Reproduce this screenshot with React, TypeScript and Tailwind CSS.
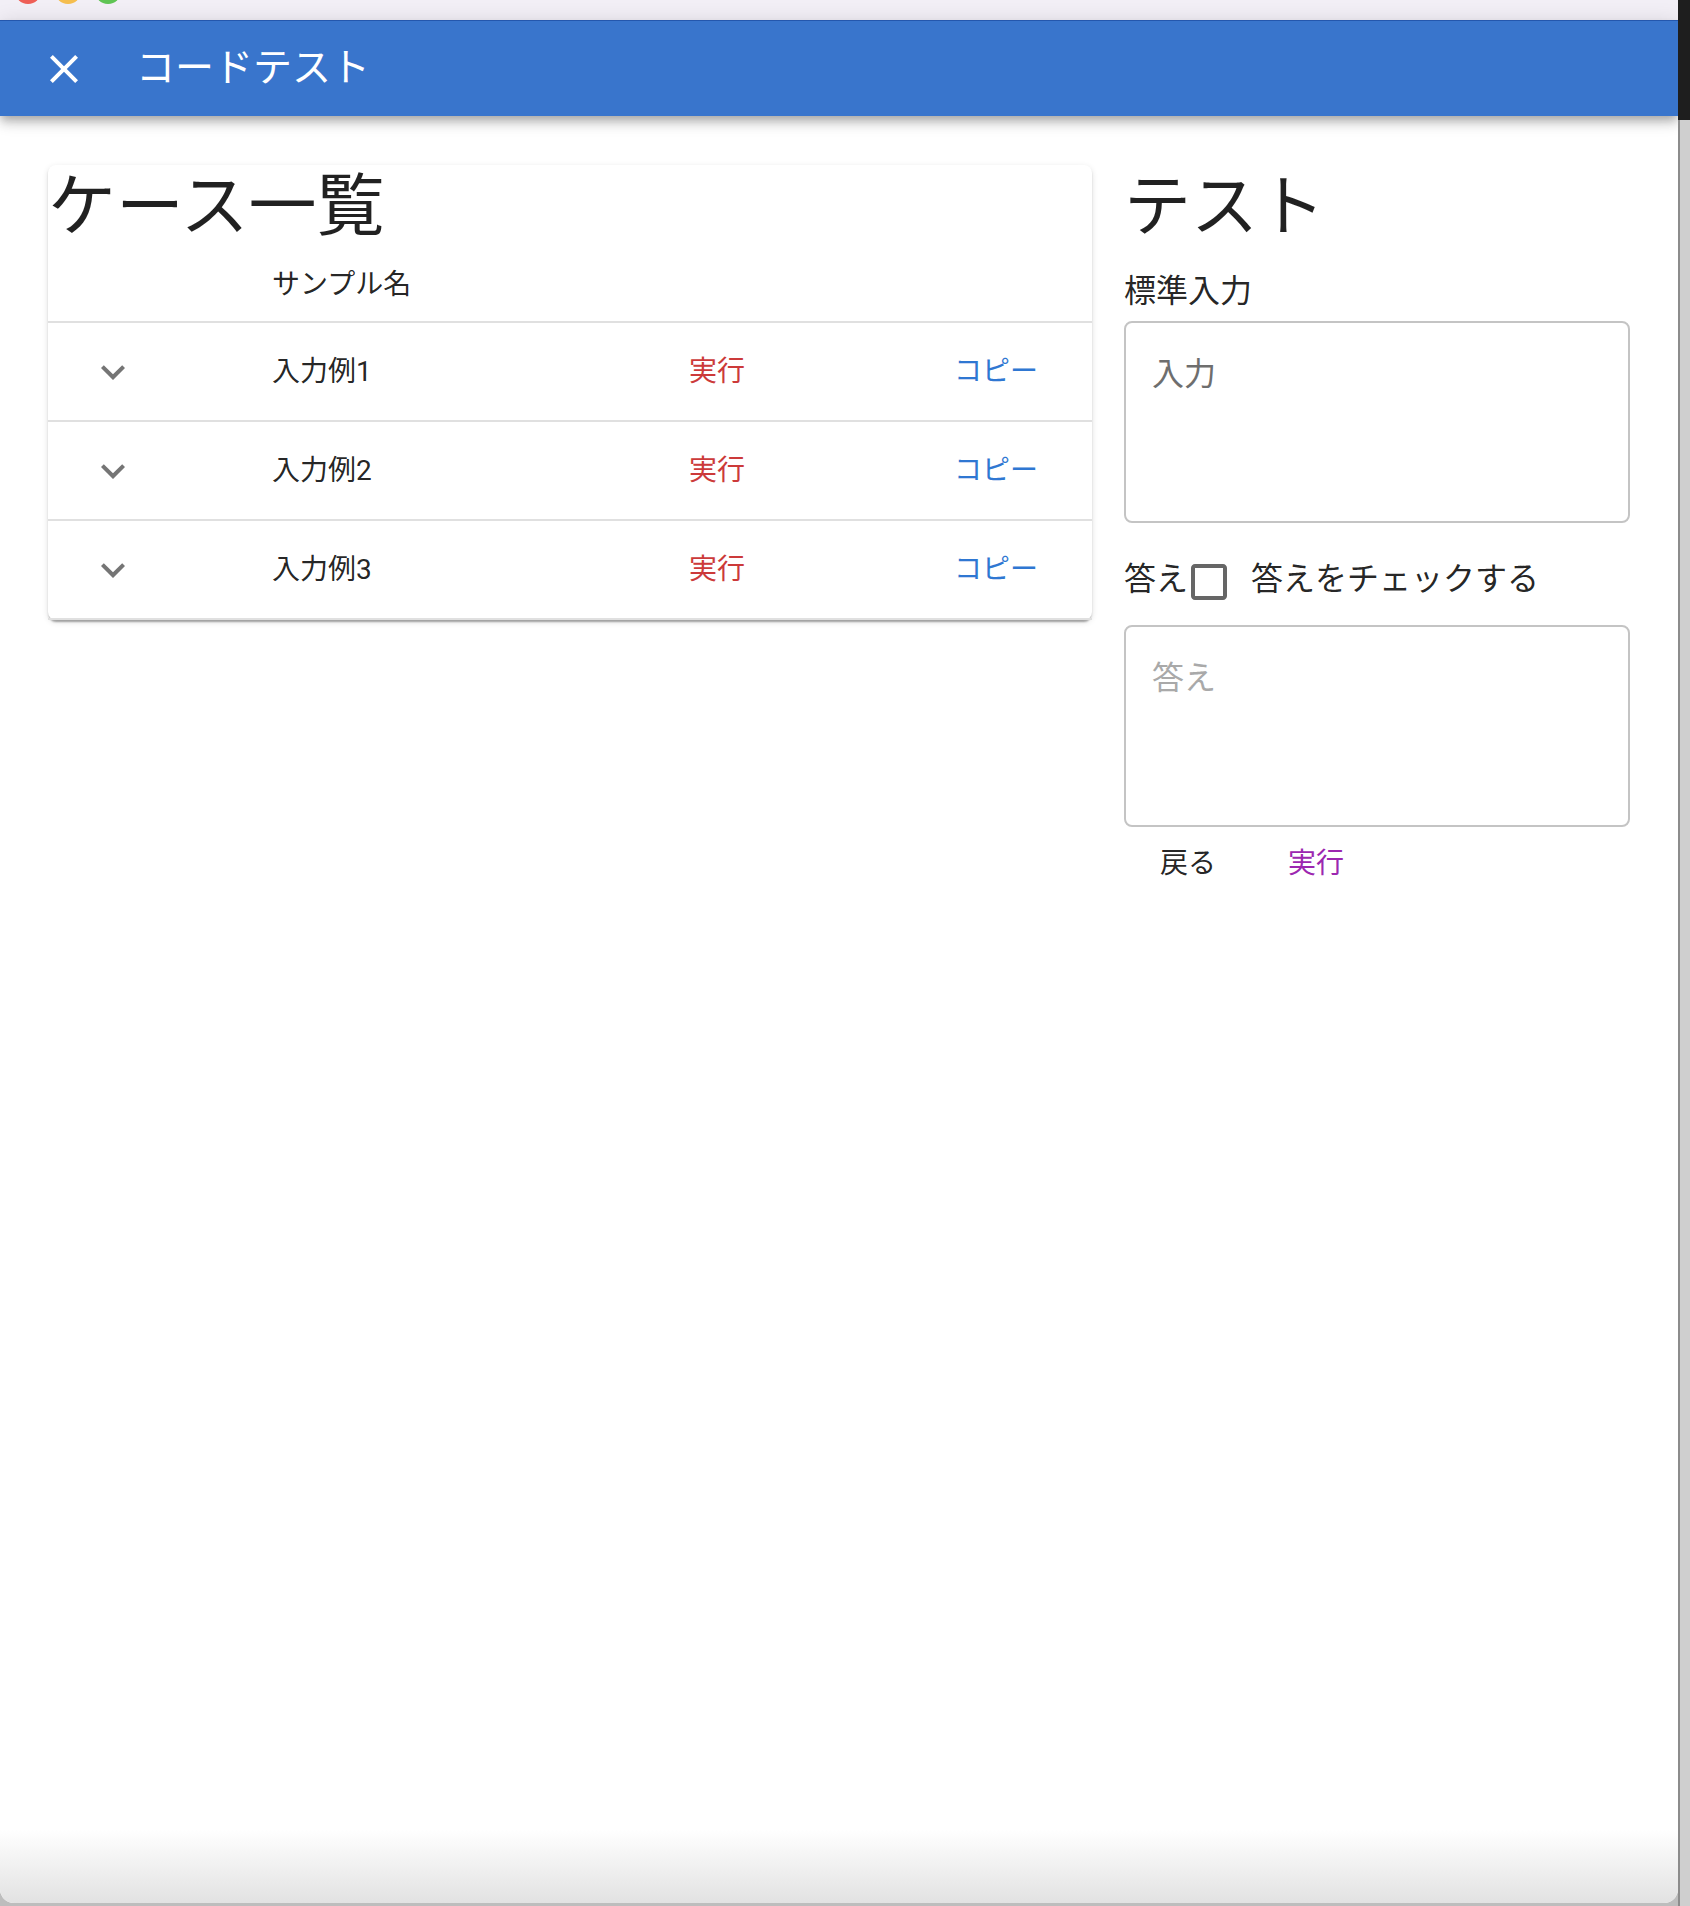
import React from 'react';

const cases = ['入力例1', '入力例2', '入力例3'];

const ChevronDown = () => (
  <svg viewBox="0 0 24 24" className="w-[48px] h-[48px] fill-[#757575]">
    <path d="M7.41 8.59 12 13.17l4.59-4.58L18 10l-6 6-6-6 1.41-1.41z" />
  </svg>
);

const CaseRow = ({ name }: { name: string }) => (
  <div className="flex h-[99px] items-center border-b-2 border-[#e0e0e0]">
    <div className="w-[192px] pl-[41px] flex items-center">
      <ChevronDown />
    </div>
    <div className="w-[417px] pl-[32px] text-[28px] text-[rgba(0,0,0,0.87)]">{name}</div>
    <div className="w-[266px] pl-[32px] text-[28px] text-[#cc3a3a]">実行</div>
    <div className="flex-1 pl-[31px] text-[28px] text-[#2f77d2]">コピー</div>
  </div>
);

const TextBox = ({ placeholder, tone }: { placeholder: string; tone: string }) => (
  <div className="h-[202px] rounded-[8px] border-2 border-[#c4c4c4] pt-[28px] px-[26px]">
    <div className={`text-[32px] leading-[46px] ${tone}`}>{placeholder}</div>
  </div>
);

export default function App() {
  return (
    <div className="flex w-[1690px] h-[1906px] bg-[#bdbdbd] font-['Roboto','Noto_Sans_CJK_JP',sans-serif]">
      <div className="flex flex-col w-[1678px] h-[1903px] bg-white rounded-b-[14px] overflow-hidden">
        {/* window title bar */}
        <div className="h-[20px] bg-[#f2eff6] flex gap-[14px] pl-[15px] overflow-hidden">
          <div className="w-[26px] h-[26px] -mt-[22px] rounded-full bg-[#ee5f57]" />
          <div className="w-[26px] h-[26px] -mt-[22px] rounded-full bg-[#f5be4f]" />
          <div className="w-[26px] h-[26px] -mt-[22px] rounded-full bg-[#5fc454]" />
        </div>

        {/* app bar */}
        <div className="relative z-10 h-[96px] bg-[#3975cc] border-t border-[#2457ad] flex items-center pl-[40px] shadow-[0_4px_8px_-2px_rgba(0,0,0,0.2),0_8px_10px_0_rgba(0,0,0,0.14),0_2px_20px_0_rgba(0,0,0,0.12)]">
          <svg viewBox="0 0 24 24" className="w-[48px] h-[48px] fill-white">
            <path d="M19 6.41 17.59 5 12 10.59 6.41 5 5 6.41 10.59 12 5 17.59 6.41 19 12 13.41 17.59 19 19 17.59 13.41 12z" />
          </svg>
          <div className="ml-[48px] text-[39px] text-white">コードテスト</div>
        </div>

        <div className="flex-1 flex gap-[32px] px-[48px] pt-[49px]">
          {/* case list */}
          <div className="w-[1044px] self-start bg-white rounded-[8px] shadow-[0_4px_2px_-2px_rgba(0,0,0,0.2),0_2px_2px_0_rgba(0,0,0,0.14),0_2px_6px_0_rgba(0,0,0,0.12)]">
            <div className="h-[84px] text-[68px] leading-[84px] text-[rgba(0,0,0,0.87)]">ケース一覧</div>
            <div className="flex h-[74px] items-center border-b-2 border-[#e0e0e0]">
              <div className="w-[192px]" />
              <div className="pl-[32px] text-[28px] text-[rgba(0,0,0,0.87)]">サンプル名</div>
            </div>
            {cases.map((c) => (
              <CaseRow key={c} name={c} />
            ))}
          </div>

          {/* test panel */}
          <div className="w-[506px] flex flex-col">
            <div className="h-[84px] text-[67px] leading-[84px] text-[rgba(0,0,0,0.87)]">テスト</div>
            <div className="mt-[18px] h-[48px] text-[32px] leading-[48px] text-[rgba(0,0,0,0.87)]">標準入力</div>
            <div className="mt-[6px]">
              <TextBox placeholder="入力" tone="text-[#6e6e6e]" />
            </div>
            <div className="mt-[16px] h-[86px] flex items-center text-[32px] text-[rgba(0,0,0,0.87)]">
              <span className="mb-[6px]">答え</span>
              <svg viewBox="0 0 24 24" className="w-[48px] h-[48px] -ml-[3px] fill-[#666666]">
                <path d="M19 5v14H5V5h14m0-2H5c-1.11 0-2 .9-2 2v14c0 1.1.89 2 2 2h14c1.1 0 2-.9 2-2V5c0-1.1-.9-2-2-2z" />
              </svg>
              <span className="ml-[18px] mb-[6px]">答えをチェックする</span>
            </div>
            <TextBox placeholder="答え" tone="text-[#a9a9a9]" />
            <div className="flex h-[73px] items-center">
              <button className="w-[128px] text-[28px] text-[rgba(0,0,0,0.87)]">戻る</button>
              <button className="w-[128px] text-[28px] text-[#9c27b0]">実行</button>
            </div>
          </div>
        </div>

        {/* window bottom shading */}
        <div className="h-[73px] bg-gradient-to-b from-white to-[#e2e2e2]" />
      </div>

      <div className="w-[12px] flex flex-col">
        <div className="h-[120px] bg-[#1e1e1e]" />
        <div className="flex-1 bg-[#cfcfcf] border-l-2 border-[#8c8c8c]" />
      </div>
    </div>
  );
}
